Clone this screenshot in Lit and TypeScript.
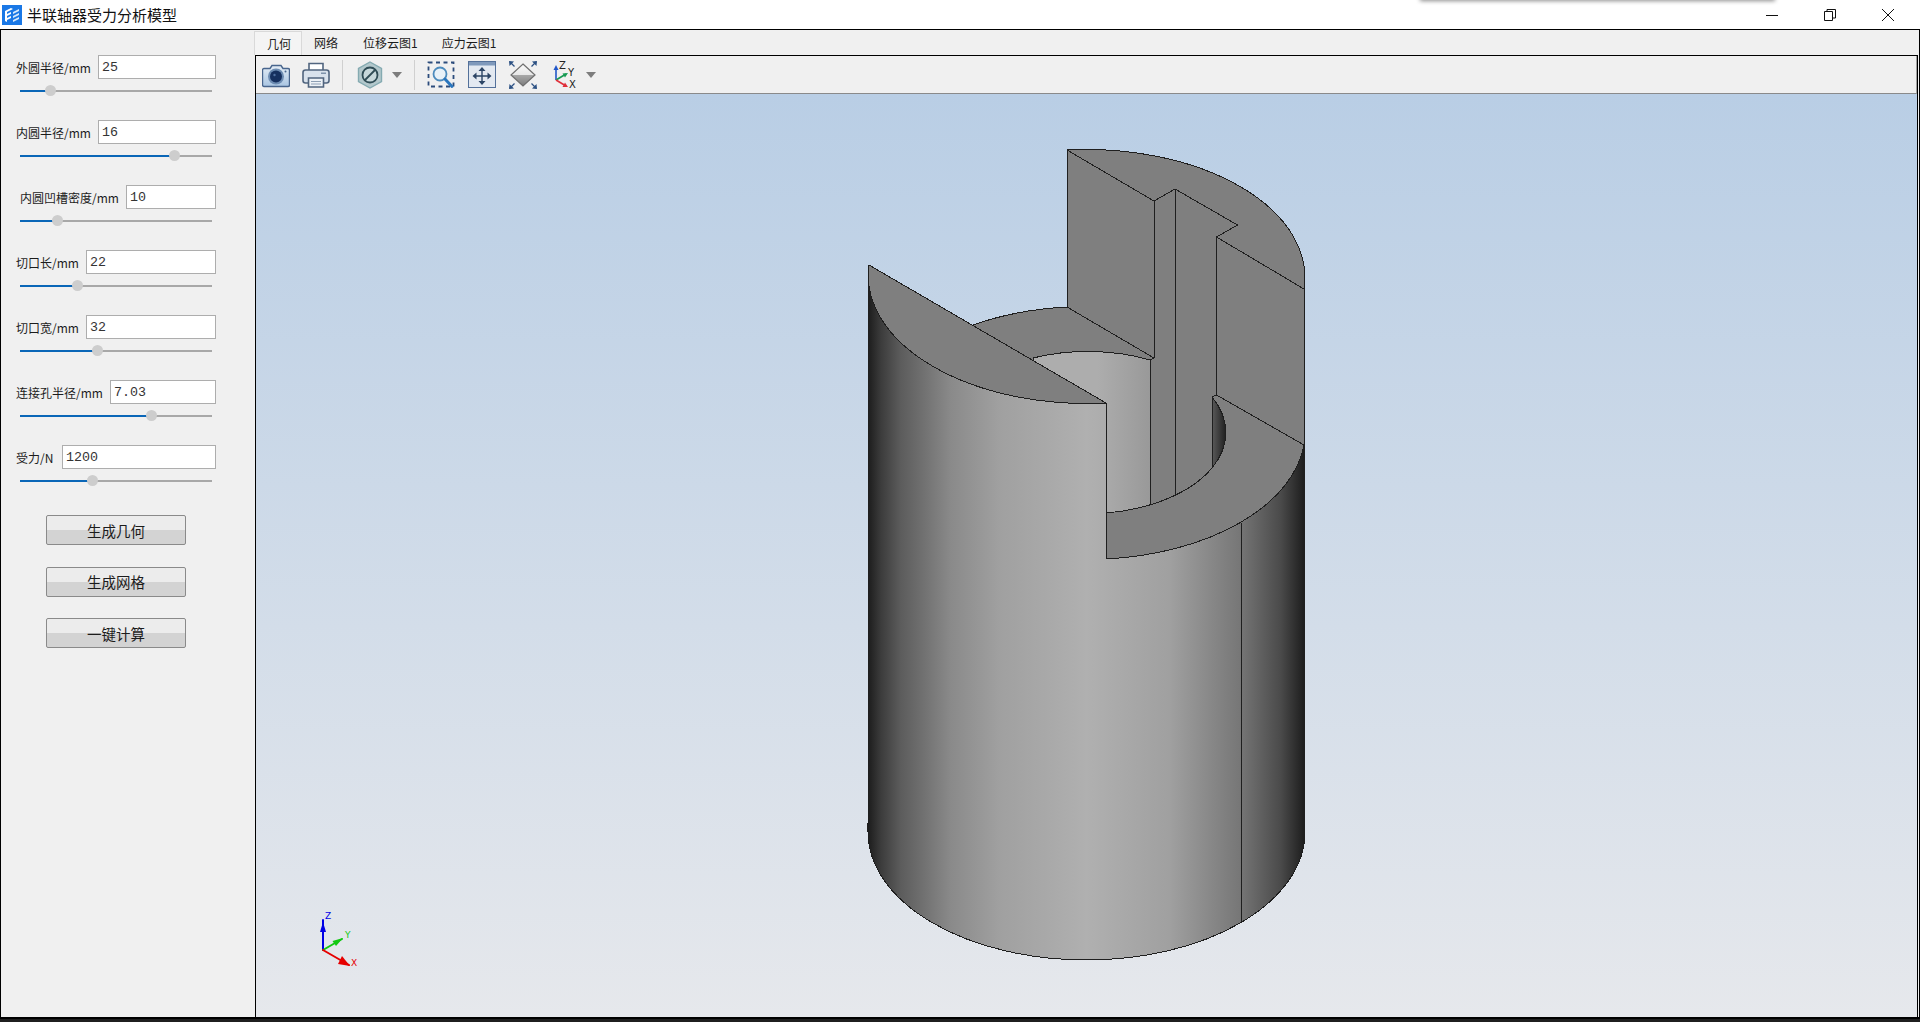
import { LitElement, html, css, svg } from "lit";
import { customElement } from "lit/decorators.js";

const FIELDS = [
  { label: "外圆半径/mm", value: "25", inputW: 118, thumb: 30, indent: false },
  { label: "内圆半径/mm", value: "16", inputW: 118, thumb: 154, indent: false },
  { label: "内圆凹槽密度/mm", value: "10", inputW: 90, thumb: 37, indent: true },
  { label: "切口长/mm", value: "22", inputW: 130, thumb: 57, indent: false },
  { label: "切口宽/mm", value: "32", inputW: 130, thumb: 77, indent: false },
  { label: "连接孔半径/mm", value: "7.03", inputW: 106, thumb: 131, indent: false },
  { label: "受力/N", value: "1200", inputW: 154, thumb: 72, indent: false },
];
const BUTTONS = ["生成几何", "生成网格", "一键计算"];
const TABS = ["几何", "网络", "位移云图1", "应力云图1"];

const R = "218.5 128 0 0";
const r = "139.5 81.7 0 0";

const model = svg`
  <g shape-rendering="crispEdges" stroke="#1f1f1f" stroke-width="1" stroke-linejoin="round">
    <path fill="url(#body)" d="M869 265 A${R} 0 1106 403 L1106 559 A${R} 0 1304 445 L1305 832 A${R} 1 868 832 Z"/>
    <path fill="url(#bore)" d="M1033 358 A${r} 1 1150 360 L1150 505 A${r} 1 1106 513 L1106 403 L1033 364 Z"/>
    <path fill="#7f7f7f" stroke="none" d="M1067 150 L1154 201 L1175 189 L1237.5 225 L1216.5 237 L1304 289 L1304 445 L1216.5 395 L1212 397 L1212 468 A${r} 1 1150 505 L1150 360 L1154 358 L1067 307 Z"/>
    <path fill="#7f7f7f" d="M973 325 A${R} 1 1067 307 L1154 358 L1150 360 A${r} 0 1033 358 L1036 366 L976 332 Z"/>
    <path fill="#7f7f7f" d="M869 265 L1106 403 A${R} 1 869 265 Z"/>
    <path fill="#7f7f7f" d="M1067 150 A${R} 1 1304 289 L1216.5 237 L1237.5 225 L1175 189 L1154 201 Z"/>
    <path fill="url(#hole)" d="M1212 397 A${r} 1 1212 468 Z"/>
    <path fill="#7f7f7f" d="M1106 513 A${r} 0 1212 468 A${r} 0 1212 397 L1216.5 395 L1304 445 A${R} 1 1106 559 Z"/>
    <path fill="none" d="M1067 150 V307 M1154 201 V358 M1175 189 V496 M1216.5 237 V395 M1150 360 V505 M1304 289 V445 M1241.5 523 V922"/>
  </g>`;

const triad = svg`
  <g stroke-linecap="round" font-family="'DejaVu Sans', sans-serif" font-size="9">
    <line x1="323" y1="950" x2="323" y2="920" stroke="#0000e6" stroke-width="2"/>
    <path d="M323 922 L326 932 H320 Z" fill="#0000e6"/>
    <line x1="323" y1="950" x2="342" y2="939" stroke="#12c812" stroke-width="2"/>
    <path d="M343 938 L336 946 L332.500 941 Z" fill="#12c812"/>
    <line x1="323" y1="950" x2="349" y2="965" stroke="#e60000" stroke-width="2"/>
    <path d="M350 966 L338 964 L342 956 Z" fill="#e60000"/>
    <text x="325" y="919" fill="#0000e6">Z</text>
    <text x="345" y="938" fill="#12c812">Y</text>
    <text x="351" y="966" fill="#e60000">X</text>
  </g>`;

const caret = html`<svg class="caret" viewBox="0 0 10 6"><path d="M0 0H10L5 6Z" fill="#7d7d7d"/></svg>`;

@customElement("app-root")
export class AppRoot extends LitElement {
  static styles = css`
    :host { display: block; position: relative; width: 1920px; height: 1022px; overflow: hidden; background: #1f1f1f;
      font-family: "Noto Sans CJK SC", "Liberation Sans", sans-serif; color: #1c1c1c; }
    .title { height: 29px; background: #fff; display: flex; align-items: center; position: relative; }
    .logo { width: 20px; height: 20px; margin-left: 2px; }
    .title-text { font-size: 15px; margin-left: 5px; line-height: 29px; color: #111; }
    .controls { margin-left: auto; margin-right: 3px; display: flex; align-items: center; }
    .ctl { width: 58px; height: 29px; display: flex; align-items: center; justify-content: center; }
    .ctl svg { width: 14px; height: 14px; }
    .popup { position: absolute; left: 1420px; top: -10px; width: 355px; height: 10px; background: #fff; box-shadow: 0 1px 4px rgba(0,0,0,.45); }
    .window { height: 990px; box-sizing: border-box; border: 1px solid #000; border-bottom-width: 2px; background: #f0f0f0; display: flex; }
    .side { width: 254px; flex: none; padding-top: 25px; box-sizing: border-box; }
    .field { height: 65px; box-sizing: border-box; padding: 0 39px 0 15px; }
    .row { display: flex; align-items: center; height: 24px; }
    .row.indent { padding-left: 4px; }
    .lbl { font-size: 12px; white-space: nowrap; }
    input { margin-left: auto; height: 24px; box-sizing: border-box; border: 1px solid #adadad; background: #fff; padding: 0 3px;
      font: 13.33px "Liberation Mono", monospace; color: #333; outline: none; border-radius: 0; }
    .slider { position: relative; margin: 6px 0 0 4px; width: 192px; height: 12px; }
    .track { position: absolute; left: 0; right: 0; top: 5px; height: 2px; background: #a8a8a8; }
    .fill { position: absolute; left: 0; top: 5px; height: 2px; background: #0a66b7; }
    .thumb { position: absolute; top: 0; width: 11px; height: 11px; margin-left: -5.5px; border-radius: 50%; background: #cdcdcd; }
    .btns { display: flex; flex-direction: column; gap: 21.5px; margin: 5px 0 0 45px; width: 140px; }
    button { height: 30px; box-sizing: border-box; border: 1px solid #8a8a8a; border-radius: 2px; padding: 0;
      background: linear-gradient(#ececec 0 50%, #d3d3d3 50% 100%); font: 14.5px "Noto Sans CJK SC", sans-serif; color: #1c1c1c; }
    .main { flex: 1; min-width: 0; display: flex; flex-direction: column; }
    .tabs { height: 25px; display: flex; align-items: flex-end; flex: none; }
    .tab { height: 24px; line-height: 24px; font-size: 12px; box-sizing: border-box; white-space: nowrap; }
    .tab.active { background: #f4f4f4; border: 1px solid #d9d9d9; border-bottom: none; margin-left: -1px; padding: 0 12px; width: 48px; }
    .tab.t1 { padding: 0 13px 0 12px; }
    .tab.t2 { padding: 0 12px; }
    .pane { flex: 1; min-height: 0; border: 1px solid #000; border-bottom: none; margin-right: 1px; display: flex; flex-direction: column; }
    .toolbar { height: 38px; flex: none; box-sizing: border-box; border-bottom: 1px solid #8a8a8a; border-right: 1px solid #a0a0a0; background: #f0f0f0; display: flex; align-items: center; padding-left: 6px; }
    .ico { width: 28px; height: 28px; flex: none; }
    .sep { width: 1px; height: 30px; background: #d0d0d0; flex: none; }
    .caret { display: block; width: 10px; height: 6px; flex: none; }
    .m12 { margin-left: 12px; } .m13 { margin-left: 13px; } .m15 { margin-left: 15px; } .m8 { margin-left: 8px; } .m6 { margin-left: 6px; }
    .view { flex: 1; min-height: 0; background: linear-gradient(#b9cee5, #e6e8ec); }
    .view svg { display: block; width: 100%; height: 100%; }
  `;

  render() {
    return html`
      <div class="title">
        <svg class="logo" viewBox="0 0 20 20">
          <rect width="20" height="20" fill="#1a78e6"/>
          <path d="M3 6 L9 3 L11 4 L5 7 V9 L9 7 V9 L5 11 V13 L9 11 V13 L5 15 V17 L3 16 Z" fill="#fff"/>
          <path d="M11 7 L17 4 V6 L11 9 Z M11 11 L17 8 V10 L11 13 Z M11 15 L17 12 V14 L11 17 Z" fill="#d7e9fb"/>
        </svg>
        <span class="title-text">半联轴器受力分析模型</span>
        <div class="controls">
          <div class="ctl"><svg viewBox="0 0 14 14"><path d="M1 7.500H13" stroke="#111" fill="none"/></svg></div>
          <div class="ctl"><svg viewBox="0 0 14 14"><path d="M1.500 3.500H9.500V12.500H1.500Z M4 3.500V1.500H12.500V10H9.500" stroke="#111" fill="none"/></svg></div>
          <div class="ctl"><svg viewBox="0 0 14 14"><path d="M1 1L13 13M13 1L1 13" stroke="#111" fill="none"/></svg></div>
        </div>
        <div class="popup"></div>
      </div>
      <div class="window">
        <div class="side">
          ${FIELDS.map((f) => html`
            <div class="field">
              <div class="row ${f.indent ? "indent" : ""}">
                <span class="lbl">${f.label}</span>
                <input .value=${f.value} style="width:${f.inputW}px" />
              </div>
              <div class="slider">
                <div class="track"></div>
                <div class="fill" style="width:${f.thumb}px"></div>
                <div class="thumb" style="left:${f.thumb}px"></div>
              </div>
            </div>`)}
          <div class="btns">${BUTTONS.map((b) => html`<button>${b}</button>`)}</div>
        </div>
        <div class="main">
          <div class="tabs">
            ${TABS.map((t, i) => html`<div class="tab ${i === 0 ? "active" : i === 1 ? "t1" : "t2"}">${t}</div>`)}
          </div>
          <div class="pane">
            <div class="toolbar">
              <svg class="ico" viewBox="0 0 28 28">
                <defs><linearGradient id="cam" x1="0" y1="0" x2="0" y2="1"><stop offset="0" stop-color="#e4edf6"/><stop offset="1" stop-color="#a9c5e2"/></linearGradient></defs>
                <path d="M2 7.500H8L10 4.500H19L21 7.500H26A1.500 1.500 0 0 1 27.500 9V24A1.500 1.500 0 0 1 26 25.500H2A1.500 1.500 0 0 1 .5 24V9A1.500 1.500 0 0 1 2 7.500Z" fill="url(#cam)" stroke="#48658d" stroke-width="1.400"/>
                <circle cx="14" cy="15.500" r="8" fill="#6d8cb2"/>
                <circle cx="14" cy="15.500" r="6" fill="#16305f"/>
                <circle cx="12.500" cy="14" r="1.200" fill="#4f6f9f"/>
                <circle cx="23.500" cy="10.500" r="1" fill="#48658d"/>
              </svg>
              <svg class="ico m12" viewBox="0 0 28 28">
                <path d="M7 9V2.500H21V9" fill="#fff" stroke="#51657f" stroke-width="1.600"/>
                <rect x="1" y="9" width="26" height="13" rx="2.500" fill="#d9e2ec" stroke="#51657f" stroke-width="1.600"/>
                <rect x="19" y="11.500" width="5" height="1.500" fill="#7f93ab"/>
                <path d="M6.500 17H21.500V26H6.500Z" fill="#eef2f6" stroke="#51657f" stroke-width="1.600"/>
                <path d="M9 20.500H19M9 23H19" stroke="#8ea0b5" stroke-width="1.200"/>
              </svg>
              <div class="sep m12"></div>
              <svg class="ico m13" viewBox="0 0 28 28">
                <path d="M14 1L25.500 7.500V20.500L14 27L2.500 20.500V7.500Z" fill="#b3c8cc" stroke="#84aab1" stroke-width="1.400"/>
                <circle cx="14" cy="14" r="7.500" fill="#c7d8db" stroke="#2f4c55" stroke-width="1.800"/>
                <path d="M9 19L19 9" stroke="#2f4c55" stroke-width="1.800"/>
              </svg>
              <span class="m8">${caret}</span>
              <div class="sep m12"></div>
              <svg class="ico m12" viewBox="0 0 28 28">
                <rect x="1.500" y="1.500" width="25" height="24" fill="none" stroke="#2c4c7c" stroke-width="1.800" stroke-dasharray="4 3.500"/>
                <circle cx="13" cy="13" r="6.500" fill="#e8f1f8" stroke="#4d8bbd" stroke-width="1.800"/>
                <path d="M18 18L25 25.500" stroke="#2a76bd" stroke-width="3" stroke-linecap="round"/>
              </svg>
              <svg class="ico m13" viewBox="0 0 28 28">
                <rect x=".5" y=".5" width="27" height="26" fill="#e3e9f1" stroke="#54719a"/>
                <rect x="1" y="1" width="26" height="3.500" fill="#7f99bb"/>
                <path d="M14 7.500V22.500M6 15H22" stroke="#2c4566" stroke-width="1.400"/>
                <path d="M14 6L10.500 10H17.500ZM14 24L10.500 20H17.500ZM4.500 15L8.500 11.500V18.500ZM23.500 15L19.500 11.500V18.500Z" fill="#2c4566"/>
              </svg>
              <svg class="ico m13" viewBox="0 0 28 28">
                <defs><linearGradient id="dia" x1="0" y1="0" x2="0" y2="1"><stop offset="0" stop-color="#fafafa"/><stop offset=".5" stop-color="#e6e6e6"/><stop offset=".5" stop-color="#a8a8a8"/><stop offset="1" stop-color="#7c7c7c"/></linearGradient></defs>
                <path d="M14 3L26 14L14 25L2 14Z" fill="url(#dia)" stroke="#6f6f6f" stroke-width="1.200"/>
                <path d="M0 0L5 .5L.5 5ZM28 0L23 .5L27.500 5ZM0 28L5 27.500L.5 23ZM28 28L23 27.500L27.500 23Z" fill="#2d5284"/>
                <path d="M1 1L5.500 5.500M27 1L22.500 5.500M1 27L5.500 22.500M27 27L22.500 22.500" stroke="#2d5284" stroke-width="1.300"/>
              </svg>
              <svg class="ico m15" viewBox="0 0 28 28" font-family="'DejaVu Sans', sans-serif" font-size="10">
                <path d="M4 19V7" stroke="#2257c9" stroke-width="1.600"/><path d="M4 4L1.500 9H6.500Z" fill="#2257c9"/>
                <path d="M4 19L14 13" stroke="#169a52" stroke-width="1.600"/><path d="M16 12L10.500 12.500L13 16.500Z" fill="#169a52"/>
                <path d="M4 19L14 25" stroke="#e0303a" stroke-width="1.600"/><path d="M16 26L10.500 26L13 21.500Z" fill="#e0303a"/>
                <text x="7" y="8" fill="#222">Z</text><text x="16" y="15" fill="#222">Y</text><text x="17" y="27" fill="#222">X</text>
              </svg>
              <span class="m6">${caret}</span>
            </div>
            <div class="view">
              <svg viewBox="256 94 1661 923" preserveAspectRatio="none">
                <defs>
                  <linearGradient id="body" gradientUnits="userSpaceOnUse" x1="868" y1="0" x2="1305" y2="0">
                    <stop offset="0" stop-color="#1c1c1c"/>
                    <stop offset=".03" stop-color="#3c3c3c"/>
                    <stop offset=".075" stop-color="#5c5c5c"/>
                    <stop offset=".19" stop-color="#8a8a8a"/>
                    <stop offset=".3" stop-color="#a0a0a0"/>
                    <stop offset=".5" stop-color="#b0b0b0"/>
                    <stop offset=".69" stop-color="#a0a0a0"/>
                    <stop offset=".85" stop-color="#777"/>
                    <stop offset=".945" stop-color="#4a4a4a"/>
                    <stop offset="1" stop-color="#1c1c1c"/>
                  </linearGradient>
                  <linearGradient id="bore" gradientUnits="userSpaceOnUse" x1="1033" y1="0" x2="1150" y2="0">
                    <stop offset="0" stop-color="#adadad"/><stop offset=".55" stop-color="#adadad"/><stop offset="1" stop-color="#999"/>
                  </linearGradient>
                  <linearGradient id="hole" gradientUnits="userSpaceOnUse" x1="1212" y1="0" x2="1226" y2="0">
                    <stop offset="0" stop-color="#5a5a5a"/><stop offset="1" stop-color="#1f1f1f"/>
                  </linearGradient>
                </defs>
                ${model}
                ${triad}
              </svg>
            </div>
          </div>
        </div>
      </div>
    `;
  }
}
